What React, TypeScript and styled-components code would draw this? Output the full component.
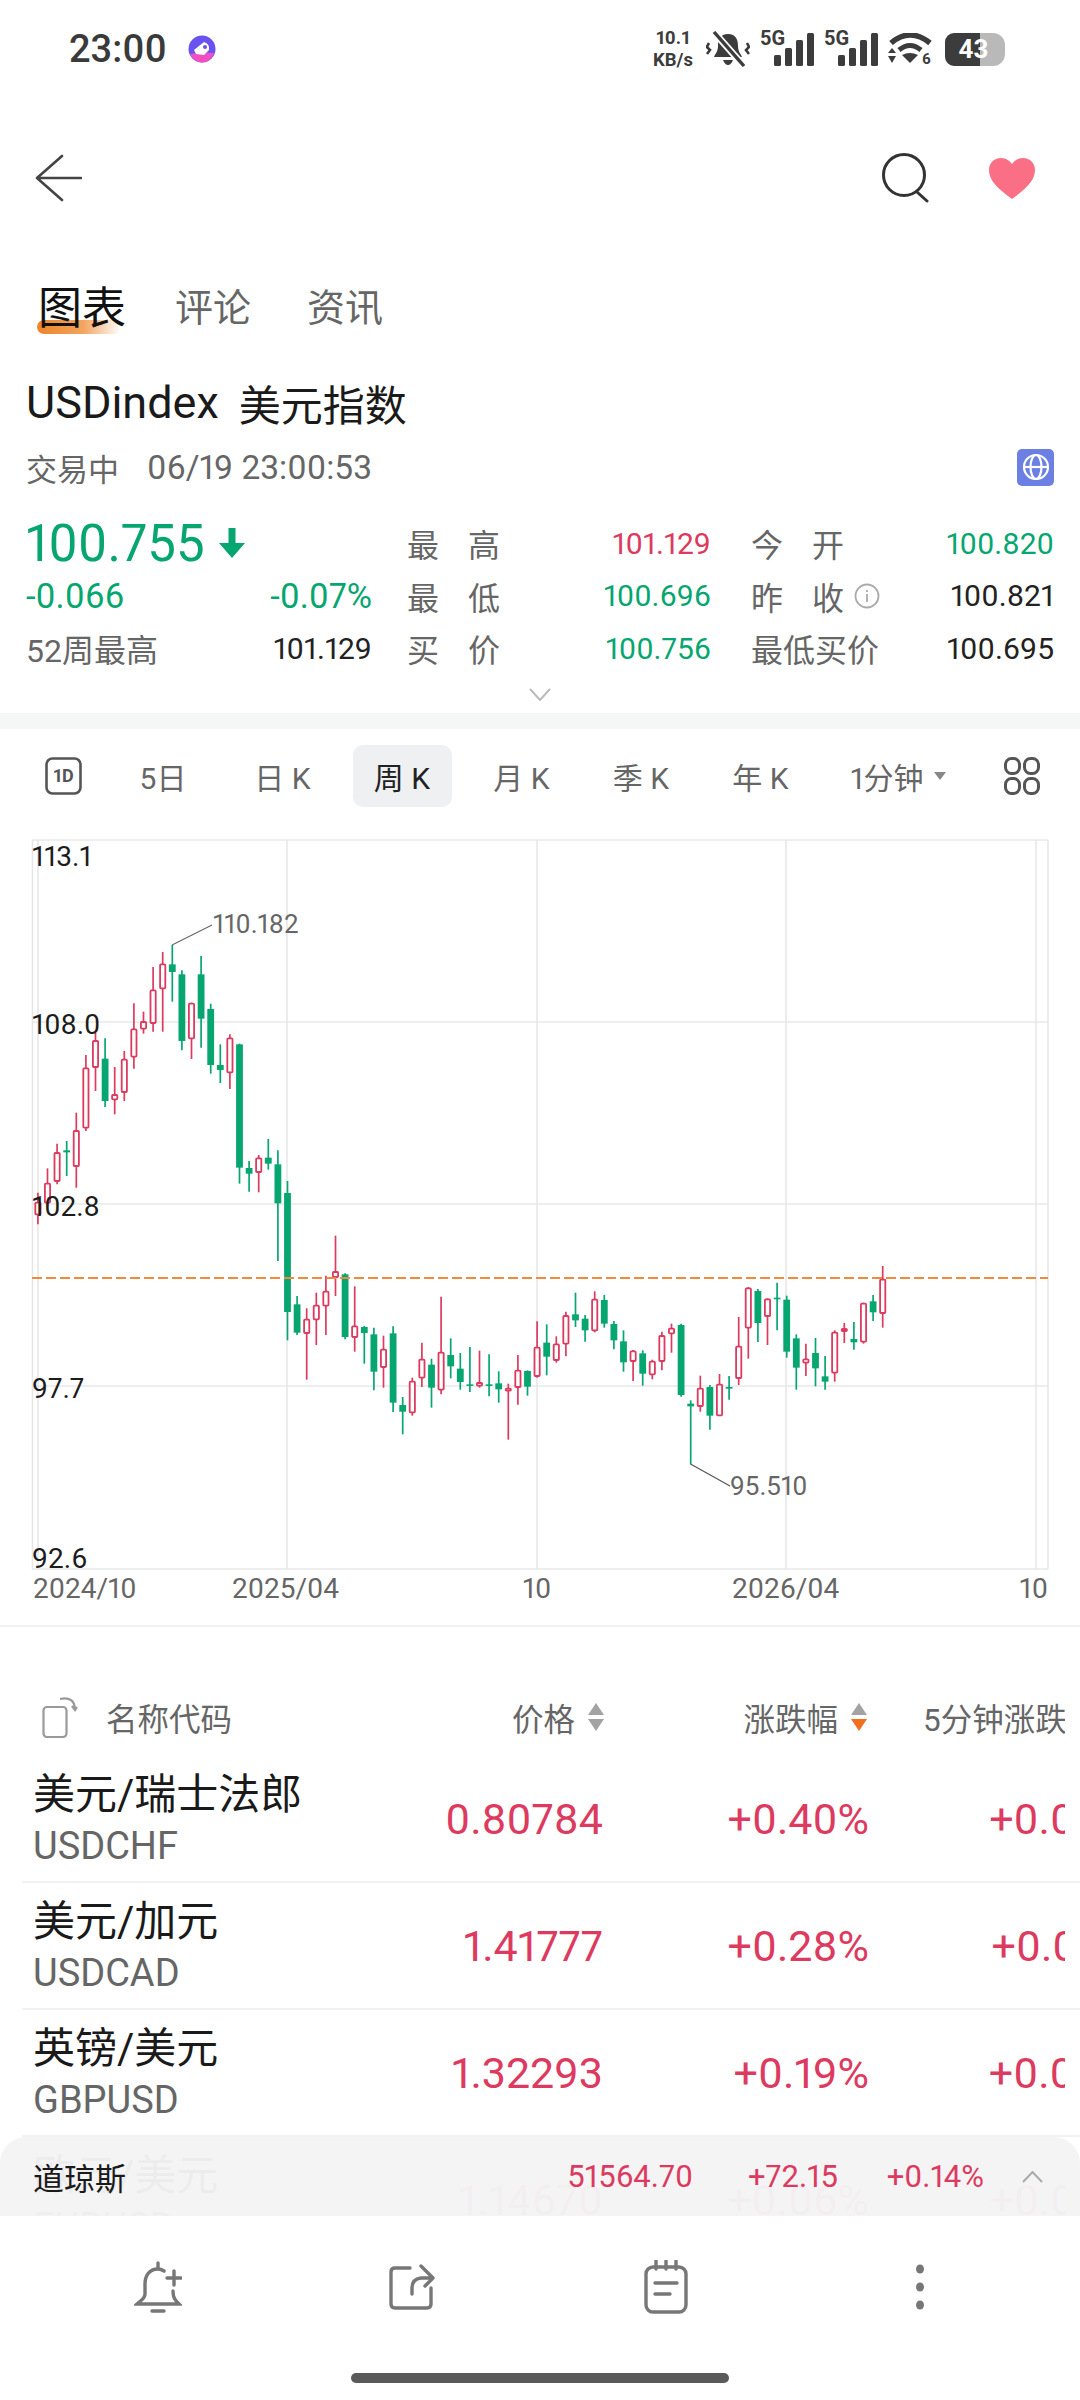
import React from "react";
import styled, { createGlobalStyle } from "styled-components";

const FONT = `Roboto, "Noto Sans CJK SC", sans-serif`;
const RED = "#dd3a5f";
const GREEN = "#07a671";

const Global = createGlobalStyle`
  html, body { margin: 0; padding: 0; background: #fff; }
  * { box-sizing: border-box; }
`;

const Page = styled.div`
  position: relative;
  width: 1080px;
  height: 2400px;
  overflow: hidden;
  background: #fff;
  font-family: ${FONT};
  font-variant-numeric: proportional-nums;
  color: #222;
  display: flex;
  flex-direction: column;
`;

/* ---------- status bar ---------- */
const StatusBar = styled.div`
  height: 100px;
  flex: none;
  display: flex;
  align-items: center;
  padding: 0 75px 2px 69px;
`;
const Clock = styled.span`
  font-size: 38px;
  font-weight: 500;
  color: #3a3a3a;
`;
const AppDot = styled.svg`
  width: 30px;
  height: 28px;
  margin-left: 20px;
`;
const StatusIcons = styled.div`
  margin-left: auto;
  display: flex;
  align-items: center;
  gap: 10px;
`;
const Speed = styled.div`
  width: 46px;
  display: flex;
  flex-direction: column;
  align-items: center;
  font-size: 18.5px;
  line-height: 22px;
  font-weight: 700;
  color: #3c3c3c;
  white-space: nowrap;
`;
const IconSvg = styled.svg`
  display: block;
  flex: none;
`;
const OneDIcon = styled(IconSvg)`
  margin-right: 11px;
`;
const SignalSvg = styled.svg`
  display: block;
  flex: none;
  margin-top: -6px;
`;
const WifiSvg = styled.svg`
  display: block;
  flex: none;
  margin-bottom: -6px;
`;
const SvgLabel = styled.text`
  font-family: ${FONT};
  font-weight: 700;
`;
const Battery = styled.div`
  position: relative;
  width: 60px;
  height: 33px;
  border-radius: 9px 12px 12px 9px;
  background: linear-gradient(90deg, #3c3c3c 0 58%, #b9b9b9 58% 100%);
  color: #fff;
  font-size: 26px;
  font-weight: 700;
  display: flex;
  align-items: center;
  justify-content: center;
  padding-right: 3px;
  margin-left: 2px;
`;

/* ---------- nav ---------- */
const NavBar = styled.div`
  height: 156px;
  flex: none;
  display: flex;
  align-items: center;
  padding: 0 45px 0 34px;
`;
const NavRight = styled.div`
  margin-left: auto;
  display: flex;
  align-items: center;
  gap: 59px;
`;

/* ---------- tabs ---------- */
const Tabs = styled.div`
  height: 97px;
  flex: none;
  display: flex;
  align-items: center;
  padding-left: 38px;
  gap: 49px;
`;
const Tab = styled.span<{ $active?: boolean }>`
  position: relative;
  font-size: ${(p) => (p.$active ? 44 : 38)}px;
  color: ${(p) => (p.$active ? "#111" : "#666")};
  margin-right: ${(p) => (p.$active ? "0" : "7px")};
  ${(p) =>
    p.$active
      ? `&::after {
          content: "";
          position: absolute;
          left: -1px;
          bottom: 3px;
          width: 84px;
          height: 14px;
          border-radius: 8px 2px 8px 8px;
          background: linear-gradient(90deg, #ee8429, #f3a45f 55%, rgba(255,255,255,0));
          z-index: 0;
        }`
      : ""}
`;
const TabText = styled.span`
  position: relative;
  z-index: 1;
`;

/* ---------- title ---------- */
const Title = styled.div`
  height: 99px;
  flex: none;
  display: flex;
  align-items: center;
  padding-left: 26px;
  font-size: 42px;
  color: #1a1a1a;
  white-space: pre;
`;
const TitleCode = styled.span`
  font-size: 45px;
  margin-right: -1px;
`;
const MetaLine = styled.div`
  height: 30px;
  flex: none;
  display: flex;
  align-items: center;
  padding: 0 26px 0 26px;
  font-size: 31px;
  color: #666;
  gap: 28px;
`;
const MetaTime = styled.span`
  font-size: 33.5px;
`;
const GlobeBadge = styled.div`
  margin-left: auto;
  width: 37px;
  height: 37px;
  border-radius: 5px;
  background: #6b80e2;
  display: flex;
  align-items: center;
  justify-content: center;
`;

/* ---------- quote grid ---------- */
const Quote = styled.div`
  height: 231px;
  flex: none;
  padding: 35px 0 0 26px;
  display: grid;
  grid-template-columns: 346px 339px 343px;
  grid-auto-rows: 52.5px;
  align-items: center;
  position: relative;
`;
const Cell = styled.div<{ $inset?: number }>`
  display: flex;
  align-items: center;
  justify-content: space-between;
  padding-left: ${(p) => p.$inset ?? 0}px;
  white-space: nowrap;
`;
const Label = styled.span<{ $spaced?: boolean }>`
  font-size: 32px;
  color: #666;
  display: inline-flex;
  align-items: center;
  ${(p) => (p.$spaced ? "width: 93px; justify-content: space-between;" : "")}
`;
const LabelWrap = styled.span`
  display: inline-flex;
  align-items: center;
  gap: 10px;
`;
const Value = styled.span<{ $color?: string; $big?: boolean }>`
  font-size: ${(p) => (p.$big ? 34.5 : 30)}px;
  color: ${(p) => p.$color ?? "#222"};
`;
const BigPrice = styled.span`
  font-size: 51px;
  color: ${GREEN};
  display: inline-flex;
  align-items: center;
  gap: 14px;
`;
const Expand = styled.svg`
  position: absolute;
  left: 529px;
  top: 206px;
`;
const Band = styled.div`
  height: 16px;
  flex: none;
  background: #f5f6f6;
`;

/* ---------- timeframe ---------- */
const Frames = styled.div`
  height: 102px;
  flex: none;
  padding: 16px 40px 24px 45px;
  display: flex;
  align-items: center;
  gap: 20.5px;
`;
const Frame = styled.div<{ $active?: boolean }>`
  width: 99px;
  height: 62px;
  border-radius: 10px;
  display: flex;
  align-items: center;
  justify-content: center;
  font-size: 30px;
  white-space: pre;
  color: ${(p) => (p.$active ? "#222" : "#666")};
  background: ${(p) => (p.$active ? "#eef0f1" : "transparent")};
`;
const IntervalPick = styled.div`
  display: flex;
  align-items: center;
  gap: 10px;
  margin-left: 20px;
  font-size: 30px;
  color: #666;
  white-space: nowrap;
`;
const FramesEnd = styled.div`
  margin-left: auto;
`;
const Caret = styled.span`
  display: block;
  width: 0;
  height: 0;
  border-left: 6px solid transparent;
  border-right: 6px solid transparent;
  border-top: 8px solid #888;
`;

/* ---------- chart ---------- */
const ChartWrap = styled.div`
  flex: none;
  height: 796px;
  border-bottom: 2px solid #f1f2f2;
`;
const ChartSvg = styled.svg`
  display: block;
  width: 1080px;
  height: 794px;
`;
const AxisY = styled.text`
  font-family: ${FONT};
  font-size: 28px;
  fill: #1c1c1c;
`;
const AxisX = styled.text`
  font-family: ${FONT};
  font-size: 28px;
  fill: #666;
`;
const PeakText = styled.text`
  font-family: ${FONT};
  font-size: 26px;
  fill: #666;
`;

/* ---------- table ---------- */
const Head = styled.div`
  flex: none;
  width: 1065px;
  height: 78px;
  margin-top: 51px;
  overflow: hidden;
  display: grid;
  grid-template-columns: 333px 272px 263px 300px;
  align-items: center;
  font-size: 31.5px;
  color: #666;
  white-space: nowrap;
`;
const HeadName = styled.div`
  display: flex;
  align-items: center;
  padding-left: 42px;
  gap: 28px;
`;
const HeadCol = styled.div`
  display: flex;
  align-items: center;
  justify-content: flex-end;
  gap: 12px;
`;
const HeadLast = styled.div`
  padding-left: 55px;
`;
const RowOuter = styled.div`
  flex: none;
  margin-left: 22px;
  height: 127px;
  border-bottom: 2px solid #f1f2f3;
`;
const RowClip = styled.div`
  width: 1043px;
  height: 125px;
  overflow: hidden;
  display: grid;
  grid-template-columns: 300px 270px 266px 262px;
  align-items: center;
  padding-left: 11px;
`;
const Names = styled.div`
  display: flex;
  flex-direction: column;
  gap: 4px;
  white-space: nowrap;
`;
const RowName = styled.span`
  font-size: 42px;
  line-height: 50px;
  color: #1a1a1a;
`;
const RowCode = styled.span`
  font-size: 38px;
  line-height: 44px;
  color: #666;
`;
const RowNum = styled.span`
  font-size: 43px;
  color: ${RED};
  text-align: right;
  white-space: nowrap;
`;

/* ---------- dock ---------- */
const Dock = styled.div`
  position: absolute;
  left: 0;
  right: 0;
  bottom: 0;
  display: flex;
  flex-direction: column;
`;
const Ticker = styled.div`
  height: 79px;
  border-radius: 26px 26px 0 0;
  background: rgba(244, 244, 245, 0.97);
  display: grid;
  grid-template-columns: 515px 145px 145px 146px 38px 21px;
  align-items: center;
  padding-left: 33px;
  white-space: nowrap;
`;
const TickerName = styled.span`
  font-size: 31px;
  color: #1a1a1a;
`;
const TickerNum = styled.span`
  font-size: 31px;
  color: ${RED};
  text-align: right;
`;
const TickerCaret = styled.svg`
  grid-column: 6;
`;
const BottomBar = styled.div`
  background: #fff;
  height: 184px;
  display: flex;
  flex-direction: column;
  align-items: center;
`;
const Actions = styled.div`
  width: 100%;
  height: 142px;
  padding-left: 31px;
  display: grid;
  grid-template-columns: repeat(4, 254px);
  justify-items: center;
  align-items: center;
`;
const HomeBar = styled.div`
  margin-top: 15px;
  width: 378px;
  height: 10px;
  border-radius: 5px;
  background: #5a5a5a;
`;

/* ---------- data ---------- */
type C = [string, number, number, number, number];
// y values in 3x crop units from y=830
const A: C[] = [
  ["r",1085,1115,1150,1180],["r",1012,1058,1115,1125],["r",938,966,1050,1060],["g",930,958,964,1035],
  ["r",845,900,1005,1070],["r",672,712,890,900],["r",605,630,708,780],["g",622,683,810,828],
  ["r",708,792,805,850],["r",660,686,783,810],["r",517,595,677,713],["r",542,573,593,608],
  ["r",408,478,576,602],["r",363,400,472,602],["g",342,400,423,512],["g",418,430,630,658],
  ["r",515,518,622,684],["g",375,430,563,650],["g",518,534,702,728],["g",640,702,717,756],
  ["r",610,622,724,774],["g",638,640,1010,1058],["g",990,1011,1028,1082],["r",972,982,1023,1084],
  ["g",924,980,998,1016],["g",958,1000,1117,1290],["g",1050,1086,1443,1528],
];
// y values in 3x crop units from y=1200
const B: C[] = [
  ["g",285,310,395,402],["r",322,356,396,536],["r",275,314,355,432],["r",224,272,314,402],
  ["r",104,213,228,285],["g",217,220,408,415],["r",256,376,408,452],["g",375,378,396,488],
  ["g",380,400,512,568],["r",404,446,498,560],["g",376,397,605,633],["g",588,612,632,700],
  ["r",530,542,634,644],["r",425,476,530,558],["g",473,491,560,620],["r",287,455,566,580],
  ["g",412,462,496,532],["g",456,503,543,566],["g",438,550,553,573],["r",449,546,554,560],
  ["g",460,550,553,586],["g",511,547,565,605],["r",548,563,566,716],["r",462,509,558,611],
  ["g",508,510,557,584],["r",361,440,525,530],["g",370,425,467,523],["r",406,430,477,485],
  ["r",332,345,428,466],["g",275,340,358,378],["g",342,353,388,422],["r",271,296,388,394],
  ["g",282,297,368,380],["g",360,369,418,445],["g",388,421,484,512],["r",447,451,480,540],
  ["g",448,457,518,554],["r",476,482,520,535],["r",392,405,480,508],["r",368,383,397,455],
  ["g",368,372,582,587],["g",598,608,616,790],["r",524,563,615,632],["g",552,558,644,686],
  ["r",519,551,643,645],["g",525,558,563,596],["r",348,437,531,552],["r",258,262,380,473],
  ["g",264,270,366,423],["r",292,295,345,432],["g",245,290,294,388],["g",284,296,452,470],
  ["g",400,412,500,566],["r",428,475,485,525],["g",411,456,502,556],["g",465,526,542,566],
  ["r",388,395,515,542],["r",366,384,390,426],["g",363,414,424,446],["r",305,308,422,428],
  ["g",282,301,334,360],["r",195,236,336,380],
];
const candles = [
  ...A.map((c) => [c[0], c[1] / 3, c[2] / 3, c[3] / 3, c[4] / 3] as C),
  ...B.map((c) => [c[0], 370 + c[1] / 3, 370 + c[2] / 3, 370 + c[3] / 3, 370 + c[4] / 3] as C),
];

const Candle = ({ c, i }: { c: C; i: number }) => {
  const x = 37.9 + 9.6 * i;
  const red = c[0] === "r";
  const col = red ? RED : GREEN;
  const h = c[3] - c[2];
  return (
    <g>
      <line x1={x} x2={x} y1={c[1]} y2={c[4]} stroke={col} strokeWidth={1.7} />
      {red ? (
        <rect x={x - 2.6} y={c[2]} width={5.2} height={Math.max(h, 2)} fill="#fff" stroke={col} strokeWidth={1.8} rx={0.8} />
      ) : (
        <rect x={x - 3.4} y={c[2]} width={6.8} height={Math.max(h, 1.6)} fill={col} />
      )}
    </g>
  );
};

const Chart = () => (
  <ChartSvg viewBox="0 0 1080 794">
    {[9, 191, 373, 555, 738].map((y) => (
      <line key={y} x1={32} x2={1048} y1={y} y2={y} stroke="#e9e9e9" strokeWidth={1.6} />
    ))}
    {[32.5, 38, 287, 537, 786, 1036, 1048].map((x) => (
      <line key={x} x1={x} x2={x} y1={9} y2={738} stroke="#e6e6e6" strokeWidth={1.5} />
    ))}
    {candles.map((c, i) => (
      <Candle key={i} c={c} i={i} />
    ))}
    <line x1={32} x2={1048} y1={447} y2={447} stroke="#f08a3c" strokeWidth={2} strokeDasharray="10 4" />
    <polyline points="172,114 212,94" fill="none" stroke="#666" strokeWidth={1.2} />
    <polyline points="690.5,633 730,655" fill="none" stroke="#555" strokeWidth={1.2} />
    <PeakText x={213} y={102}>110.182</PeakText>
    <PeakText x={730} y={664}>95.510</PeakText>
    <AxisY x={32} y={35}>113.1</AxisY>
    <AxisY x={32} y={203}>108.0</AxisY>
    <AxisY x={32} y={385}>102.8</AxisY>
    <AxisY x={32} y={567}>97.7</AxisY>
    <AxisY x={32} y={737}>92.6</AxisY>
    <AxisX x={33} y={767}>2024/10</AxisX>
    <AxisX x={232} y={767}>2025/04</AxisX>
    <AxisX x={537} y={767} textAnchor="middle">10</AxisX>
    <AxisX x={732} y={767}>2026/04</AxisX>
    <AxisX x={1048} y={767} textAnchor="end">10</AxisX>
  </ChartSvg>
);

const Sort = ({ active }: { active?: boolean }) => (
  <IconSvg width="18" height="28" viewBox="0 0 18 28">
    <path d="M9 0 L17 12 H1 Z" fill="#a3a3a3" />
    <path d="M9 28 L17 16 H1 Z" fill={active ? "#f2701d" : "#a3a3a3"} />
  </IconSvg>
);

const rows = [
  ["美元/瑞士法郎", "USDCHF", "0.80784", "+0.40%", "+0.06%"],
  ["美元/加元", "USDCAD", "1.41777", "+0.28%", "+0.07%"],
  ["英镑/美元", "GBPUSD", "1.32293", "+0.19%", "+0.08%"],
  ["欧元/美元", "EURUSD", "1.14670", "+0.06%", "+0.05%"],
];

const quote = [
  { l: "最 高", v: "101.129", c: RED },
  { l: "今 开", v: "100.820", c: GREEN },
  { l: "最 低", v: "100.696", c: GREEN },
  { l: "昨 收", v: "100.821", c: "#222" },
  { l: "买 价", v: "100.756", c: GREEN },
];

const Spaced = ({ t }: { t: string }) => (
  <Label $spaced>
    <span>{t[0]}</span>
    <span>{t[2]}</span>
  </Label>
);

export default function App() {
  return (
    <Page>
      <Global />
      <StatusBar>
        <Clock>23:00</Clock>
        <AppDot viewBox="0 0 30 28">
          <ellipse cx="15" cy="14" rx="13.5" ry="13.5" fill="#6a52f0" />
          <path d="M3 19 Q15 17 27 18 Q24 27.5 15 27.5 Q7 27.5 3 19Z" fill="#f04fc4" />
          <path d="M7 15 L17 7 Q23 9 22 15 L17 20 L9 19Z" fill="#fff" />
          <circle cx="18" cy="12" r="2" fill="#6a52f0" />
        </AppDot>
        <StatusIcons>
          <Speed>
            <span>10.1</span>
            <span>KB/s</span>
          </Speed>
          <IconSvg width="44" height="36" viewBox="0 0 44 36" fill="#3c3c3c">
            <path d="M22 3 C14 3 12 9 12 15 C12 21 9 23 8 26 H36 C35 23 32 21 32 15 C32 9 30 3 22 3Z" />
            <path d="M17 29 H27 Q25 34 22 34 Q19 34 17 29Z" />
            <path d="M7 0 L37 34" stroke="#fff" strokeWidth="7" />
            <path d="M8 1 L38 35" stroke="#3c3c3c" strokeWidth="3.4" />
            <path d="M3 12 L0.8 16 L4 19 L1 23 M41 12 L43 16 L40 19 L43 23" fill="none" stroke="#3c3c3c" strokeWidth="2.6" />
          </IconSvg>
          {[0, 1].map((k) => (
            <SignalSvg key={k} width="54" height="42" viewBox="0 -6 54 42" fill="#3c3c3c">
              <SvgLabel x="0" y="14" fontSize="20">5G</SvgLabel>
              <rect x="14" y="24" width="7" height="11" rx="1.5" />
              <rect x="25" y="17" width="7" height="18" rx="1.5" />
              <rect x="36" y="9" width="7" height="26" rx="1.5" />
              <rect x="47" y="2" width="7" height="33" rx="1.5" />
            </SignalSvg>
          ))}
          <WifiSvg width="45" height="38" viewBox="0 0 45 38" fill="#3c3c3c">
            <path d="M3 10 Q22 -6 42 10" fill="none" stroke="#3c3c3c" strokeWidth="5.5" />
            <path d="M11 17 Q22 8 33 17" fill="none" stroke="#3c3c3c" strokeWidth="5" />
            <path d="M22 30 L14 22 Q22 18 30 22Z" />
            <path d="M4 15 L8 20 H0Z M4 30 L8 23 H0Z" />
            <SvgLabel x="34" y="31" fontSize="15">6</SvgLabel>
          </WifiSvg>
          <Battery>43</Battery>
        </StatusIcons>
      </StatusBar>

      <NavBar>
        <IconSvg width="48" height="48" viewBox="0 0 48 48" fill="none" stroke="#444" strokeWidth="2.6" strokeLinecap="round">
          <path d="M28 2 L3 24 L28 46 M3 24 H47" strokeLinejoin="round" />
        </IconSvg>
        <NavRight>
          <IconSvg width="48" height="50" viewBox="0 0 48 50" fill="none" stroke="#333" strokeWidth="3" strokeLinecap="round">
            <circle cx="22" cy="22" r="20.5" />
            <path d="M35 39 L45 48" />
          </IconSvg>
          <IconSvg width="46" height="41" viewBox="0 0 46 41">
            <path d="M23 41 C8 30 0 22 0 12 C0 5 5 0 12 0 C17 0 21 3 23 6 C25 3 29 0 34 0 C41 0 46 5 46 12 C46 22 38 30 23 41Z" fill="#fb6f86" />
          </IconSvg>
        </NavRight>
      </NavBar>

      <Tabs>
        <Tab $active>
          <TabText>图表</TabText>
        </Tab>
        <Tab>评论</Tab>
        <Tab>资讯</Tab>
      </Tabs>

      <Title>
        <TitleCode>USDindex</TitleCode>
        {"  美元指数"}
      </Title>
      <MetaLine>
        <span>交易中</span>
        <MetaTime>06/19 23:00:53</MetaTime>
        <GlobeBadge>
          <IconSvg width="28" height="28" viewBox="0 0 28 28" fill="none" stroke="#fff" strokeWidth="2.2">
            <circle cx="14" cy="14" r="12" />
            <ellipse cx="14" cy="14" rx="5.5" ry="12" />
            <path d="M2 14 H26" />
          </IconSvg>
        </GlobeBadge>
      </MetaLine>

      <Quote>
        <Cell>
          <BigPrice>
            100.755
            <IconSvg width="26" height="30" viewBox="0 0 26 30" fill={GREEN}>
              <path d="M9.5 0 H16.5 V15 H26 L13 30 L0 15 H9.5Z" />
            </IconSvg>
          </BigPrice>
        </Cell>
        <Cell $inset={35}>
          <Spaced t={quote[0].l} />
          <Value $color={quote[0].c}>{quote[0].v}</Value>
        </Cell>
        <Cell $inset={40}>
          <Spaced t={quote[1].l} />
          <Value $color={quote[1].c}>{quote[1].v}</Value>
        </Cell>
        <Cell>
          <Value $big $color={GREEN}>-0.066</Value>
          <Value $big $color={GREEN}>-0.07%</Value>
        </Cell>
        <Cell $inset={35}>
          <Spaced t={quote[2].l} />
          <Value $color={quote[2].c}>{quote[2].v}</Value>
        </Cell>
        <Cell $inset={40}>
          <LabelWrap>
            <Spaced t={quote[3].l} />
            <IconSvg width="26" height="26" viewBox="0 0 26 26" fill="none" stroke="#aaa" strokeWidth="1.8">
              <circle cx="13" cy="13" r="11.5" />
              <path d="M13 11 V19 M13 7 V9" />
            </IconSvg>
          </LabelWrap>
          <Value $color={quote[3].c}>{quote[3].v}</Value>
        </Cell>
        <Cell>
          <Label>52周最高</Label>
          <Value>101.129</Value>
        </Cell>
        <Cell $inset={35}>
          <Spaced t={quote[4].l} />
          <Value $color={quote[4].c}>{quote[4].v}</Value>
        </Cell>
        <Cell $inset={40}>
          <Label>最低买价</Label>
          <Value>100.695</Value>
        </Cell>
        <Expand width="22" height="13" viewBox="0 0 22 13" fill="none" stroke="#bbb" strokeWidth="2">
          <path d="M1 1 L11 12 L21 1" />
        </Expand>
      </Quote>
      <Band />

      <Frames>
        <OneDIcon width="37" height="38" viewBox="0 0 37 38" fill="none" stroke="#555" strokeWidth="2.6">
          <rect x="1.5" y="1.5" width="34" height="35" rx="6" />
          <SvgLabel x="18.5" y="25" fontSize="18" textAnchor="middle" fill="#555" stroke="none">1D</SvgLabel>
        </OneDIcon>
        <Frame>5日</Frame>
        <Frame>日 K</Frame>
        <Frame $active>周 K</Frame>
        <Frame>月 K</Frame>
        <Frame>季 K</Frame>
        <Frame>年 K</Frame>
        <IntervalPick>
          1分钟
          <Caret />
        </IntervalPick>
        <FramesEnd>
          <IconSvg width="36" height="38" viewBox="0 0 36 38" fill="none" stroke="#555" strokeWidth="3">
            <rect x="1.5" y="1.5" width="14" height="15" rx="6" />
            <rect x="20.5" y="1.5" width="14" height="15" rx="6" />
            <rect x="1.5" y="21.5" width="14" height="15" rx="6" />
            <rect x="20.5" y="21.5" width="14" height="15" rx="6" />
          </IconSvg>
        </FramesEnd>
      </Frames>

      <ChartWrap>
        <Chart />
      </ChartWrap>

      <Head>
        <HeadName>
          <IconSvg width="36" height="42" viewBox="0 0 36 42" fill="none" stroke="#9a9a9a" strokeWidth="2.2">
            <rect x="1.5" y="11" width="23" height="30" rx="3.5" />
            <path d="M18 3 Q33 0 33 14 M30 10 L33 14 L35 11" />
          </IconSvg>
          <span>名称代码</span>
        </HeadName>
        <HeadCol>
          价格
          <Sort />
        </HeadCol>
        <HeadCol>
          涨跌幅
          <Sort active />
        </HeadCol>
        <HeadLast>5分钟涨跌幅</HeadLast>
      </Head>

      {rows.map((r) => (
        <RowOuter key={r[1]}>
          <RowClip>
            <Names>
              <RowName>{r[0]}</RowName>
              <RowCode>{r[1]}</RowCode>
            </Names>
            <RowNum>{r[2]}</RowNum>
            <RowNum>{r[3]}</RowNum>
            <RowNum>{r[4]}</RowNum>
          </RowClip>
        </RowOuter>
      ))}

      <Dock>
        <Ticker>
          <TickerName>道琼斯</TickerName>
          <TickerNum>51564.70</TickerNum>
          <TickerNum>+72.15</TickerNum>
          <TickerNum>+0.14%</TickerNum>
          <TickerCaret width="21" height="12" viewBox="0 0 21 12" fill="none" stroke="#aaa" strokeWidth="2">
            <path d="M1 11 L10.5 1 L20 11" />
          </TickerCaret>
        </Ticker>
        <BottomBar>
          <Actions>
            <IconSvg width="48" height="52" viewBox="0 0 48 52" fill="none" stroke="#777" strokeWidth="3.4" strokeLinecap="round">
              <path d="M24 8 C15 8 11 15 11 23 V33 C11 38 7 39 3 43 H45 C41 39 39 37 39 30 M30 10 Q27 8 24 8 M24 2 V8 M18 50 H30 M33 17 H47 M40 10 V24" />
            </IconSvg>
            <IconSvg width="46" height="46" viewBox="0 0 46 46" fill="none" stroke="#777" strokeWidth="3.4" strokeLinecap="round" strokeLinejoin="round">
              <path d="M21 4 H6 Q2 4 2 8 V40 Q2 44 6 44 H38 Q42 44 42 40 V24 M23 30 V24 Q23 15 32 14 H44 M32 2 L44 14 L36 22" />
            </IconSvg>
            <IconSvg width="44" height="54" viewBox="0 0 44 54" fill="none" stroke="#777" strokeWidth="3.4" strokeLinecap="round">
              <rect x="2" y="7" width="40" height="45" rx="7" />
              <path d="M12 1 V9 M22 1 V9 M32 1 V9 M11 23 H33" />
              <path d="M11 34 H26" />
            </IconSvg>
            <IconSvg width="10" height="46" viewBox="0 0 10 46" fill="#777">
              <ellipse cx="5" cy="5" rx="4" ry="4.5" />
              <ellipse cx="5" cy="23" rx="4" ry="4.5" />
              <ellipse cx="5" cy="41" rx="4" ry="4.5" />
            </IconSvg>
          </Actions>
          <HomeBar />
        </BottomBar>
      </Dock>
    </Page>
  );
}
